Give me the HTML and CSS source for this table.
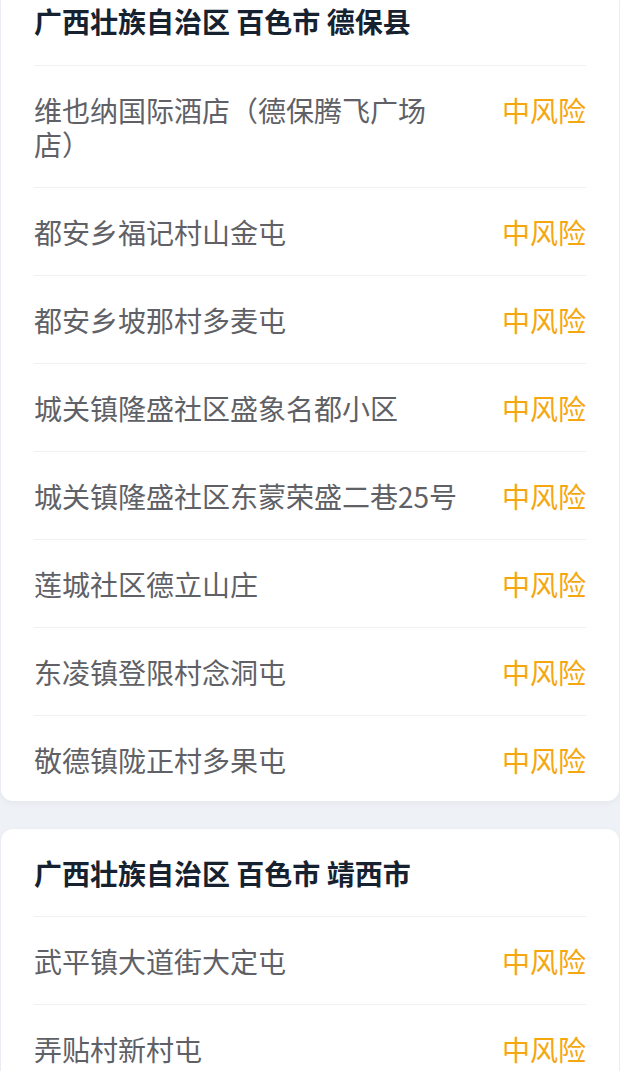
FILE: index.html
```html
<!DOCTYPE html>
<html lang="zh-CN">
<head>
<meta charset="utf-8">
<title>风险地区</title>
<link rel="stylesheet" href="styles.css">
</head>
<body>
<main class="page">
  <section class="card card-first">
    <h2 class="card-title">广西壮族自治区 百色市 德保县</h2>
    <ul class="list">
      <li class="row"><span class="name">维也纳国际酒店（德保腾飞广场店）</span><span class="risk">中风险</span></li>
      <li class="row"><span class="name">都安乡福记村山金屯</span><span class="risk">中风险</span></li>
      <li class="row"><span class="name">都安乡坡那村多麦屯</span><span class="risk">中风险</span></li>
      <li class="row"><span class="name">城关镇隆盛社区盛象名都小区</span><span class="risk">中风险</span></li>
      <li class="row"><span class="name">城关镇隆盛社区东蒙荣盛二巷25号</span><span class="risk">中风险</span></li>
      <li class="row"><span class="name">莲城社区德立山庄</span><span class="risk">中风险</span></li>
      <li class="row"><span class="name">东凌镇登限村念洞屯</span><span class="risk">中风险</span></li>
      <li class="row"><span class="name">敬德镇陇正村多果屯</span><span class="risk">中风险</span></li>
    </ul>
  </section>
  <section class="card card-last">
    <h2 class="card-title">广西壮族自治区 百色市 靖西市</h2>
    <ul class="list">
      <li class="row"><span class="name">武平镇大道街大定屯</span><span class="risk">中风险</span></li>
      <li class="row"><span class="name">弄贴村新村屯</span><span class="risk">中风险</span></li>
    </ul>
  </section>
</main>
</body>
</html>
```

FILE: styles.css
```css
* {
  box-sizing: border-box;
}

html, body {
  margin: 0;
  padding: 0;
  background: #eef1f5;
}

body {
  font-family: "Noto Sans CJK SC", "Noto Sans", sans-serif;
  font-size: 28px;
  line-height: 34px;
}

.page {
  display: flex;
  flex-direction: column;
  gap: 28px;
  padding: 0 1px;
}

.card {
  background: #ffffff;
  border-radius: 12px;
  padding: 0 33px;
  box-shadow: 0 2px 6px rgba(40, 60, 90, 0.05);
}

.card-first {
  border-top-left-radius: 0;
  border-top-right-radius: 0;
}

.card-last {
  padding-bottom: 40px;
  border-bottom-left-radius: 0;
  border-bottom-right-radius: 0;
}

.card-title {
  margin: 0;
  padding: 27px 0 26px;
  font-size: 28px;
  line-height: 34px;
  font-weight: 700;
  color: #172230;
  border-bottom: 1px solid #f0f1f3;
}

.card-first .card-title {
  padding-top: 4px;
  padding-bottom: 27px;
}

.list {
  list-style: none;
  margin: 0;
  padding: 0;
}

.row {
  display: flex;
  align-items: flex-start;
  gap: 40px;
  padding: 27px 0 26px;
  border-bottom: 1px solid #f0f1f3;
}

.row:last-child {
  border-bottom: none;
}

.card-first .row:last-child {
  padding-bottom: 24px;
}

.name {
  flex: 1;
  color: #5f6166;
}

.risk {
  flex: none;
  color: #f5a70f;
}
```
